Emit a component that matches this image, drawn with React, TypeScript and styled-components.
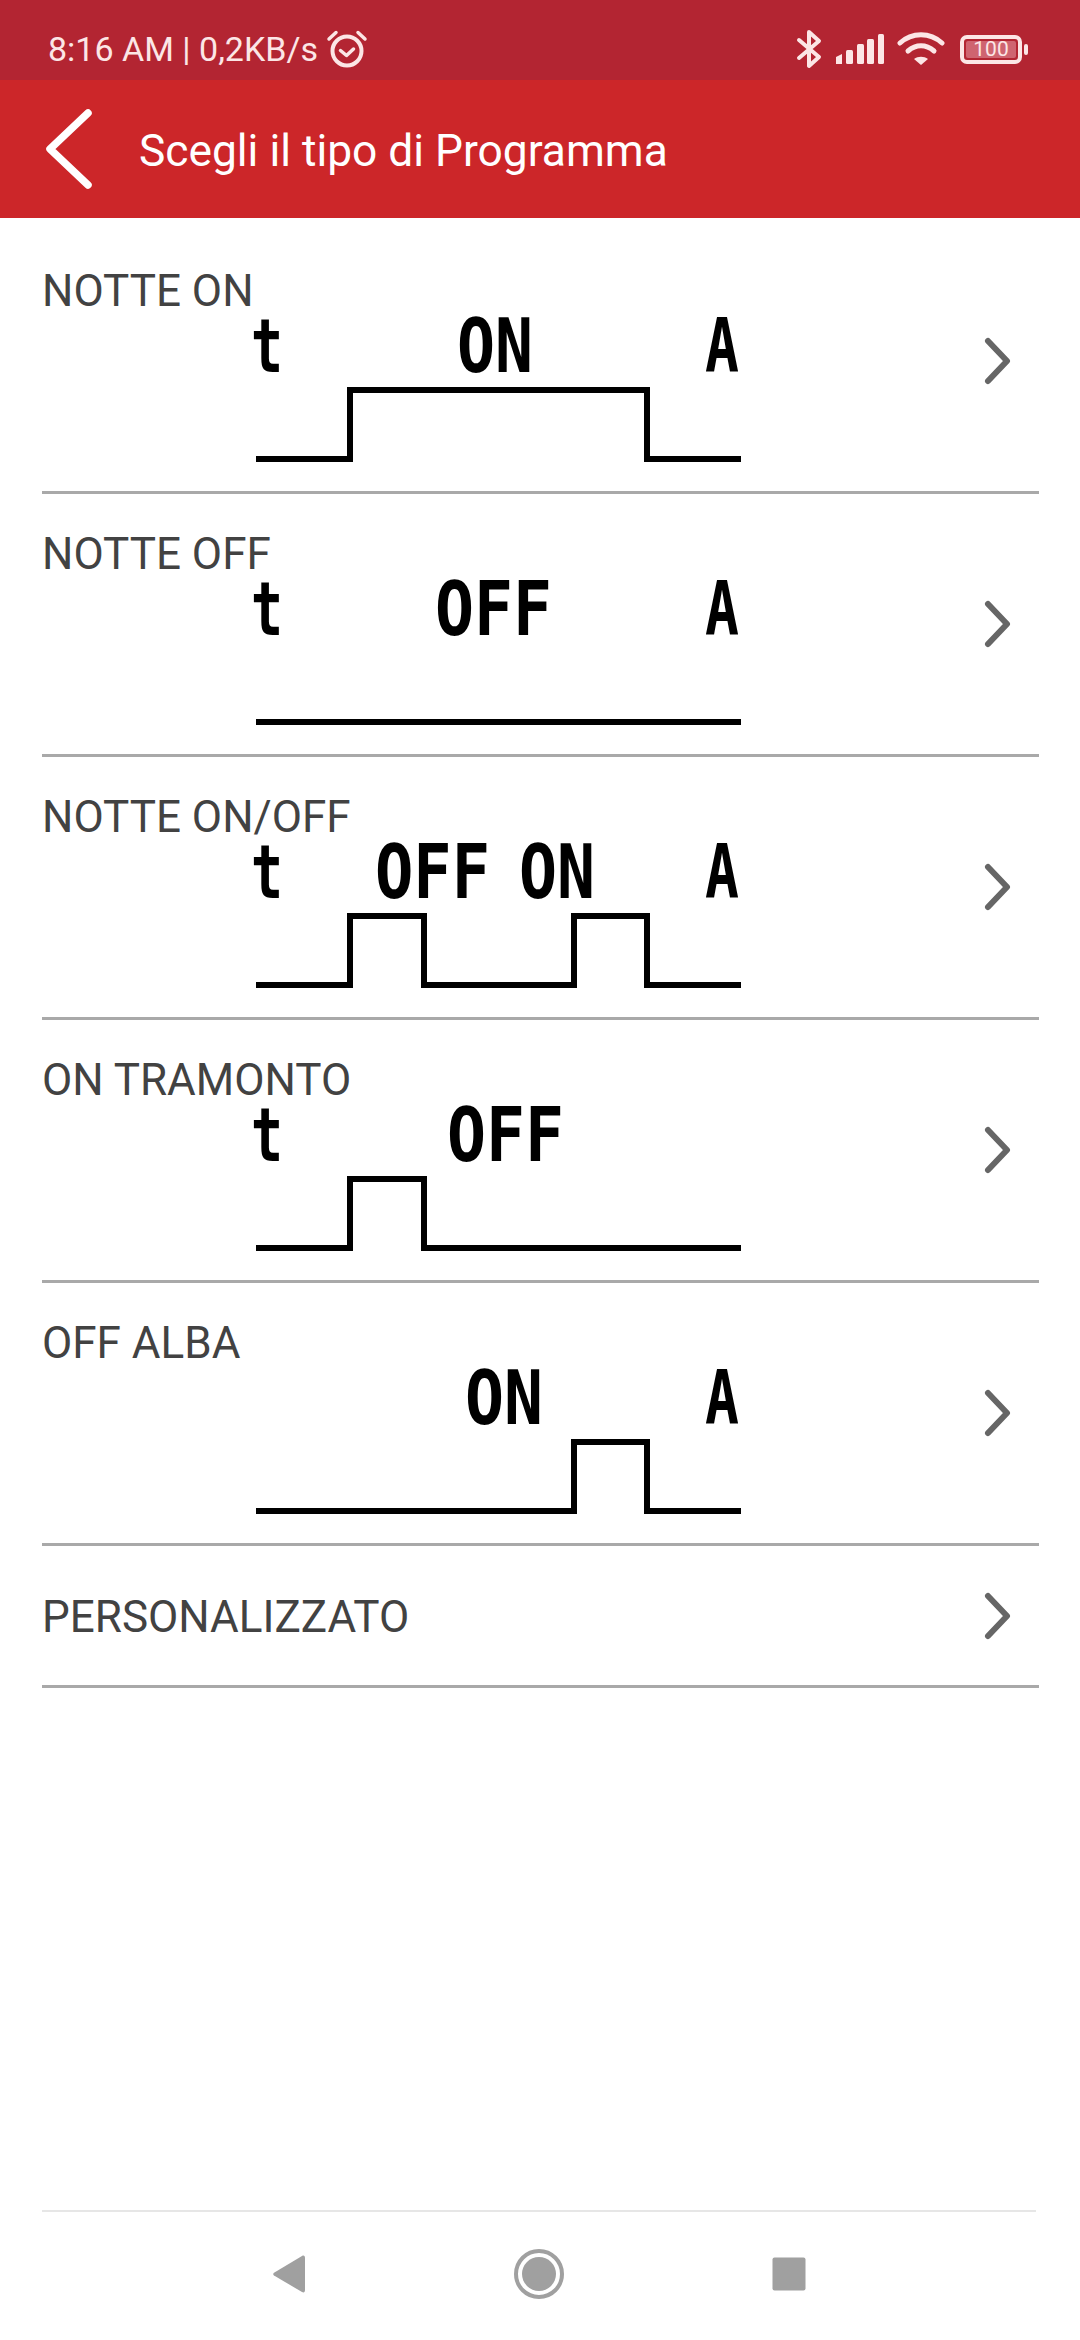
import React from "react";
import styled, { createGlobalStyle } from "styled-components";

const GlobalStyle = createGlobalStyle`
  html, body {
    margin: 0;
    padding: 0;
    background: #ffffff;
    font-family: Roboto, "Noto Sans", sans-serif;
  }
`;

const Page = styled.div`
  width: 1080px;
  height: 2340px;
  display: flex;
  flex-direction: column;
  background: #ffffff;
  overflow: hidden;
`;

const StatusBar = styled.div`
  height: 80px;
  flex: none;
  box-sizing: border-box;
  display: flex;
  align-items: center;
  justify-content: space-between;
  padding: 18px 58px 0 48px;
  background: #b32532;
  color: #fce6e6;
`;

const StatusGroup = styled.div`
  display: flex;
  align-items: center;
`;

const StatusText = styled.span`
  font-size: 34px;
  line-height: 40px;
  font-weight: 400;
  white-space: nowrap;
`;

const StatusIcon = styled.svg<{ $gap?: number }>`
  display: block;
  flex: none;
  margin-left: ${(p) => p.$gap ?? 0}px;
`;

const BatteryBox = styled.div`
  width: 62px;
  height: 29px;
  box-sizing: border-box;
  border: 4px solid #fce6e6;
  border-radius: 7px;
  padding: 2px;
  position: relative;
  margin-left: 15px;

  &::after {
    content: "";
    position: absolute;
    right: -10px;
    top: 5px;
    width: 4px;
    height: 11px;
    border-radius: 2px;
    background: #fce6e6;
  }
`;

const BatteryFill = styled.div`
  height: 100%;
  border-radius: 2px;
  background: #cf6470;
  display: flex;
  align-items: center;
  justify-content: center;
  font-size: 21px;
  line-height: 1;
  color: #fce6e6;
`;

const AppBar = styled.header`
  height: 138px;
  flex: none;
  display: flex;
  align-items: center;
  padding-left: 44px;
  background: #cc2629;
  color: #ffffff;
`;

const Title = styled.h1`
  margin: 4px 0 0 45px;
  font-size: 44.3px;
  font-weight: 400;
  white-space: nowrap;
`;

const List = styled.main`
  flex: 1;
  padding: 13px 41px 0 42px;
`;

const Row = styled.div<{ $plain?: boolean }>`
  height: ${(p) => (p.$plain ? "142px" : "263px")};
  box-sizing: border-box;
  display: flex;
  align-items: center;
  justify-content: space-between;
  padding-right: 24px;
  border-bottom: 3px solid #a9a9a9;
`;

const RowBody = styled.div<{ $plain?: boolean }>`
  align-self: ${(p) => (p.$plain ? "center" : "flex-start")};
  padding-top: ${(p) => (p.$plain ? "3px" : "40px")};
  display: flex;
  flex-direction: column;
`;

const Label = styled.div`
  font-size: 44px;
  line-height: 41px;
  color: #424242;
  white-space: nowrap;
`;

const Diagram = styled.svg`
  display: block;
  width: 520px;
  height: 160px;
  margin: -2px 0 0 198px;
  overflow: visible;
`;

const LcdText = styled.text`
  font-family: "DejaVu Sans Mono", monospace;
  font-size: 74px;
  font-weight: 700;
  fill: #000000;
`;

const NavBar = styled.nav`
  height: 130px;
  flex: none;
  box-sizing: border-box;
  margin: 0 44px 0 42px;
  border-top: 2px solid #e6e6e6;
  display: grid;
  grid-template-columns: repeat(3, 250px);
  justify-content: center;
  align-items: center;
  justify-items: center;
  padding-bottom: 4px;
`;

type Glyph = { text: string; x: number; width: number };
type Program = { label: string; glyphs: Glyph[]; wave: number[] };

const T: Glyph = { text: "t", x: 11, width: 32 };
const A: Glyph = { text: "A", x: 465, width: 34 };

// wave holds the x of each level change, starting from the low level
const programs: Program[] = [
  { label: "NOTTE ON", glyphs: [T, { text: "ON", x: 217, width: 76 }, A], wave: [110, 407] },
  { label: "NOTTE OFF", glyphs: [T, { text: "OFF", x: 195, width: 117 }, A], wave: [] },
  {
    label: "NOTTE ON/OFF",
    glyphs: [T, { text: "OFF", x: 135, width: 115 }, { text: "ON", x: 279, width: 76 }, A],
    wave: [110, 184, 334, 407],
  },
  { label: "ON TRAMONTO", glyphs: [T, { text: "OFF", x: 207, width: 117 }], wave: [110, 184] },
  { label: "OFF ALBA", glyphs: [{ text: "ON", x: 225, width: 78 }, A], wave: [334, 407] },
];

// one character of the LCD font is this wide before squeezing
const LCD_ADVANCE = 44.5;

const wavePath = (steps: number[]) => {
  const low = 149;
  const high = 80;
  let d = `M16 ${low}`;
  steps.forEach((x, i) => {
    const from = i % 2 === 0 ? low : high;
    const to = i % 2 === 0 ? high : low;
    d += ` L${x} ${from} L${x} ${to}`;
  });
  return `${d} L501 ${low}`;
};

const Chevron = () => (
  <svg width="32" height="52" viewBox="0 0 32 52" fill="none">
    <path d="M5 6 L24 26 L5 46" stroke="#666666" strokeWidth="6" strokeLinecap="round" strokeLinejoin="round" />
  </svg>
);

const ProgramDiagram: React.FC<{ program: Program }> = ({ program }) => (
  <Diagram viewBox="0 0 520 160">
    {program.glyphs.map((g) => (
      <LcdText
        key={g.text + g.x}
        transform={`translate(${g.x} 62) scale(${(g.width / (g.text.length * LCD_ADVANCE)).toFixed(3)} 1)`}
      >
        {g.text}
      </LcdText>
    ))}
    <path d={wavePath(program.wave)} fill="none" stroke="#000000" strokeWidth="6" />
  </Diagram>
);

export default function App() {
  return (
    <Page>
      <GlobalStyle />
      <StatusBar>
        <StatusGroup>
          <StatusText>8:16 AM | 0,2KB/s</StatusText>
          <StatusIcon $gap={8} width="42" height="40" viewBox="0 0 42 40" fill="none" stroke="#fce6e6">
            <circle cx="21" cy="22" r="14.5" strokeWidth="4" />
            <path d="M14.5 21.5 L20.5 26.5 L27.5 20" strokeWidth="3.5" strokeLinecap="round" strokeLinejoin="round" />
            <path d="M3 10 L10 3.5 M39 10 L32 3.5" strokeWidth="3.5" strokeLinecap="round" />
          </StatusIcon>
        </StatusGroup>
        <StatusGroup>
          <StatusIcon width="26" height="40" viewBox="0 0 26 40" fill="none" stroke="#fce6e6" strokeWidth="4" strokeLinecap="round" strokeLinejoin="round">
            <path d="M3 11 L23 28 L13 37 L13 3 L23 12 L3 29" />
          </StatusIcon>
          <StatusIcon $gap={13} width="50" height="32" viewBox="0 0 50 32" fill="#fce6e6">
            <path d="M1 24 L7 21 L7 31 L1 31 Z" />
            <rect x="11" y="17" width="7" height="14" rx="1.5" />
            <rect x="22" y="11" width="7" height="20" rx="1.5" />
            <rect x="32" y="6" width="7" height="25" rx="1.5" />
            <rect x="43" y="1" width="6" height="30" rx="1.5" />
          </StatusIcon>
          <StatusIcon $gap={12} width="48" height="36" viewBox="0 0 48 36" fill="none" stroke="#fce6e6" strokeWidth="5" strokeLinecap="round">
            <path d="M3 12 C15 1 33 1 45 12" />
            <path d="M11 20 C19 13 29 13 37 20" />
            <path d="M24 34 L17 28 C21 25 27 25 31 28 Z" fill="#fce6e6" stroke="none" />
          </StatusIcon>
          <BatteryBox>
            <BatteryFill>100</BatteryFill>
          </BatteryBox>
        </StatusGroup>
      </StatusBar>
      <AppBar>
        <svg width="50" height="84" viewBox="0 0 50 84" fill="none">
          <path d="M44 6 L6 42 L44 78" stroke="#ffffff" strokeWidth="7.5" strokeLinecap="round" strokeLinejoin="round" />
        </svg>
        <Title>Scegli il tipo di Programma</Title>
      </AppBar>
      <List>
        {programs.map((program) => (
          <Row key={program.label}>
            <RowBody>
              <Label>{program.label}</Label>
              <ProgramDiagram program={program} />
            </RowBody>
            <Chevron />
          </Row>
        ))}
        <Row $plain>
          <RowBody $plain>
            <Label>PERSONALIZZATO</Label>
          </RowBody>
          <Chevron />
        </Row>
      </List>
      <NavBar>
        <svg width="36" height="40" viewBox="0 0 36 40" fill="#a0a0a0">
          <path d="M31 2 C33 1 34 2 34 4 L34 36 C34 38 33 39 31 38 L3 21.5 C2 20.8 2 19.5 3 18.8 Z" />
        </svg>
        <svg width="50" height="50" viewBox="0 0 50 50">
          <circle cx="25" cy="25" r="23" fill="none" stroke="#a0a0a0" strokeWidth="4" />
          <circle cx="25" cy="25" r="17" fill="#a0a0a0" />
        </svg>
        <svg width="34" height="34" viewBox="0 0 34 34" fill="#a0a0a0">
          <rect x="0.5" y="0.5" width="33" height="33" rx="2" />
        </svg>
      </NavBar>
    </Page>
  );
}
